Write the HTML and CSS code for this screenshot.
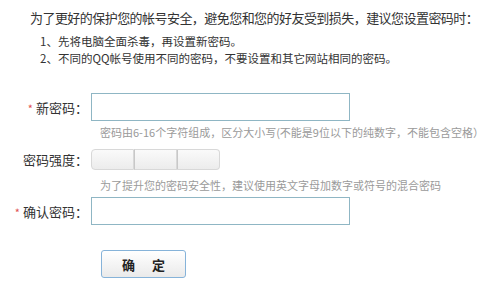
FILE: index.html
```html
<!DOCTYPE html>
<html lang="zh-CN">
<head>
  <meta charset="UTF-8">
  <title>设置密码</title>
  <link rel="stylesheet" href="styles.css">
</head>
<body>
  <div class="intro">
    <h2>为了更好的保护您的帐号安全，避免您和您的好友受到损失，建议您设置密码时：</h2>
    <ol class="tips">
      <li>1、先将电脑全面杀毒，再设置新密码。</li>
      <li>2、不同的QQ帐号使用不同的密码，不要设置和其它网站相同的密码。</li>
    </ol>
  </div>

  <form class="pwd-form">
    <div class="row">
      <label><span class="star">*</span>新密码：</label>
      <input type="password" class="text-input">
    </div>
    <p class="hint">密码由6-16个字符组成，区分大小写(不能是9位以下的纯数字，不能包含空格）</p>

    <div class="row strength-row">
      <label>密码强度：</label>
      <div class="strength">
        <span></span><span></span><span></span>
      </div>
    </div>
    <p class="hint">为了提升您的密码安全性，建议使用英文字母加数字或符号的混合密码</p>

    <div class="row">
      <label><span class="star">*</span>确认密码：</label>
      <input type="password" class="text-input">
    </div>

    <button type="button" class="ok-btn">确<span class="gap"></span>定</button>
  </form>
</body>
</html>
```

FILE: styles.css
```css
body {
  margin: 0;
  background: #fff;
  color: #333;
  font-family: "Noto Sans CJK SC", "Liberation Sans", sans-serif;
  font-size: 12px;
}
.intro { padding: 9px 0 0 30px; }
.intro h2 {
  margin: 0;
  font-size: 13px;
  font-weight: normal;
  line-height: 18px;
  color: #333;
  letter-spacing: -0.55px;
}
.tips {
  list-style: none;
  margin: 6px 0 0 10px;
  padding: 0;
  line-height: 17px;
  font-size: 11.5px;
}
.pwd-form { margin-top: 26px; }
.row {
  display: flex;
  align-items: center;
}
.row label {
  width: 88px;
  text-align: right;
  margin-right: 3px;
  font-size: 13px;
}
.star {
  color: #e05050;
  margin-right: 3px;
  font-size: 11px;
}
.text-input {
  width: 257px;
  height: 26px;
  box-sizing: content-box;
  padding: 0;
  margin: 0;
  border: 1px solid #8fb6c4;
  outline: none;
}
.hint {
  margin: 3px 0 0 100px;
  line-height: 16px;
  font-size: 11px;
  color: #9a9a9a;
}
.strength-row { margin-top: 9px; }
.strength {
  display: flex;
  width: 129px;
  height: 21px;
}
.strength span {
  flex: 1;
  box-sizing: border-box;
  border: 1px solid #d8d8d8;
  background: linear-gradient(#fafafa, #ececec);
}
.strength span + span { border-left: 1px solid #c8c8c8; }
.strength span:first-child { border-radius: 4px 0 0 4px; }
.strength span:last-child { border-radius: 0 4px 4px 0; }
.strength-row + .hint { margin-top: 7px; }
.strength-row + .hint + .row { margin-top: 4px; }
.ok-btn {
  display: block;
  margin: 25px 0 0 101px;
  width: 85px;
  height: 28px;
  border: 1px solid #86b3d9;
  border-radius: 3px;
  background: linear-gradient(#ffffff, #eaeaea);
  color: #222;
  font-family: "Noto Sans CJK SC", sans-serif;
  font-size: 13px;
  font-weight: bold;
  padding: 0;
}
.ok-btn .gap {
  display: inline-block;
  width: 17px;
}
```
